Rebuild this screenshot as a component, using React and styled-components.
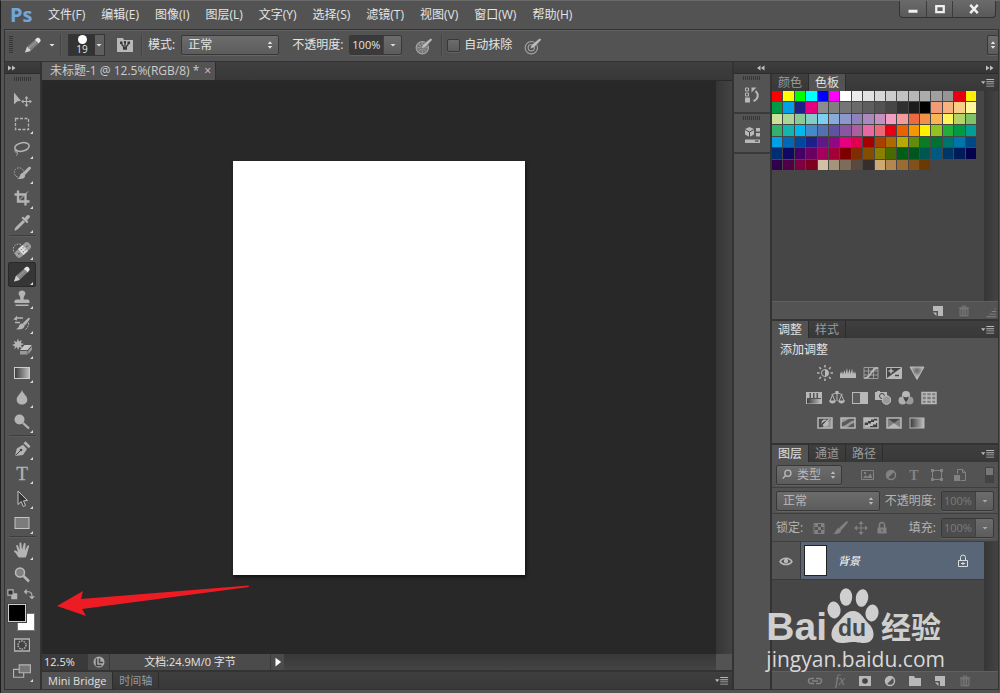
import React from 'react';
import styled, { createGlobalStyle, css } from 'styled-components';

const menus = ['文件(F)', '编辑(E)', '图像(I)', '图层(L)', '文字(Y)', '选择(S)', '滤镜(T)', '视图(V)', '窗口(W)', '帮助(H)'];

const swatches = `
ff0000 ffff00 00ff00 00ffff 0000ff ff00ff ffffff ebebeb e1e1e1 d7d7d7 cccccc c2c2c2 b7b7b7 acacac a0a0a0 959595 e60012 fff100
009944 00a0e9 1d2088 e4007f 8c8c8c 808080 757575 6a6a6a 5e5e5e 525252 464646 303030 1c1c1c 000000 f29b76 f6b37f facd89 fff799
cce198 acd598 89c997 84ccc9 7ecef4 88abda 8c97cb 8f82bc aa89bd c490bf f19ec2 f29c9f ec6941 f19149 f8b551 fff45c b3d465 80c269
32b16c 13b5b1 00b7ee 448aca 556fb5 5f52a0 8957a1 ae5da1 ea68a2 eb6877 e60012 eb6100 f39800 fff100 8fc31f 22ac38 009944 009e96
00a0e9 0068b7 00479d 1d2088 601986 920783 e4007f e5004f a40000 a84200 ac6a00 b7aa00 638c0b 097c25 007130 00736d 0075a9 004986
002e73 100964 440062 6a005f a4005b a40035 7d0000 7f2d00 834e00 8a8000 486a00 005e15 00561f 005752 005982 003567 001c58 03004c
31004a 500047 7e0043 7d0022 d1c0a5 a6937c 7e6b5a 59493f 362e2b cfa972 b28850 996c33 81511c 6a3906`.trim().split(/\s+/);

const toolGroups = [
  ['move', 'marquee', 'lasso', 'quickSelect', 'crop', 'eyedropper'],
  ['heal', 'pencil', 'stamp', 'history', 'eraser', 'gradient', 'blur', 'dodge'],
  ['pen', 'type', 'select', 'rectangle'],
  ['hand', 'zoom'],
];

const adjustments = [
  ['brightness', 'levels', 'curves', 'exposure', 'vibrance'],
  ['hue', 'balance', 'blackWhite', 'photoFilter', 'mixer', 'lookup'],
  ['invert', 'posterize', 'threshold', 'selective', 'gradientMap'],
];

const line = { fill: 'none', stroke: 'currentColor', strokeWidth: 1.5 };
const thin = { fill: 'none', stroke: 'currentColor', strokeWidth: 1 };

// tool drawings, on a 24 x 24 box
const toolIcons = {
  move: (
    <>
      <path d="M4 5.5v12l3-3 4-.8z" />
      <path d="M16.5 10v9M12 14.500h9" {...thin} strokeWidth="1.2" />
      <path d="M16.500 9l2 2.500h-4zM16.500 20l2-2.500h-4zM11 14.500l2.500-2v4zM22 14.500l-2.500-2v4z" />
    </>
  ),
  marquee: <rect x="5.500" y="6.500" width="13" height="11" {...thin} strokeDasharray="3 1.500" strokeWidth="1.300" />,
  lasso: (
    <>
      <ellipse cx="12" cy="10" rx="7.300" ry="4.200" transform="rotate(-12 12 10)" {...line} />
      <path d="M6 12.500c-2 1-1 3 .5 2.500s.8-2.500-.6-2M6.800 15c1 1 .5 2.500-.3 3.500" {...thin} />
    </>
  ),
  quickSelect: (
    <>
      <circle cx="9" cy="11.500" r="4.700" {...thin} strokeDasharray="1.500 1.300" />
      <path d="M20.500 6c.9.700.5 1.600-.1 2.200L15 14l-2.500-2 5.800-5.700c.7-.6 1.500-.9 2.200-.3z" />
      <path d="M12.500 12c2 .3 3 1.800 2.500 3.400-.9 2.500-4.700 3-8 2.100 2.400-.4 2.700-1.400 3.100-3 .3-1.300 1.100-2.300 2.400-2.500z" />
    </>
  ),
  crop: (
    <>
      <path d="M8 4.500V15.500h11.500M4.500 8.500h11V19.500" {...line} strokeWidth="2.300" />
      <path d="M8.500 15L18 5.500" {...thin} />
    </>
  ),
  eyedropper: (
    <>
      <path d="M13.500 9.500l-7 7-1.500 2.500 2.500-1.500 7-7" {...thin} strokeWidth="1.500" />
      <path d="M11.500 7L13 5.500l1.500 1.500 2.200-2.500c1.100-1.200 3.200-.5 3.300 1 0 .6-.2 1.200-.7 1.600L17 9.300l1.500 1.500L17 12.300z" />
    </>
  ),
  heal: (
    <>
      <path d="M11 6.500C6 4.500 1.500 9 4 14c1 2 2.500 3 3.500 3.500" {...thin} strokeDasharray="1.500 1.300" />
      <g transform="rotate(-43 13 12)">
        <rect x="4" y="8" width="18" height="8" rx="3.300" opacity=".75" />
        <rect x="10" y="8" width="6" height="8" fill="#ddd" />
        <path d="M11.500 10.500h1M14 10.500h1M11.500 13.500h1M14 13.500h1M6.500 12h2M17.500 12h2" stroke="#555" />
      </g>
    </>
  ),
  pencil: (
    <>
      <path d="M4 19.500l2-5.700 8.500-7.300 3.500 3.500-8.500 8z" fill="#808080" />
      <path d="M4 19.500l2-5.700c1.500.7 2.800 2 3.500 4.200z" fill="#cfcfcf" />
      <path d="M7.500 15.500l8.500-7.700" stroke="#a0a0a0" fill="none" />
      <path d="M13.800 7l2-1.900c1.700-1.400 4.900 1.500 3.500 3.500L17.500 10.500c-.7-1.500-2-2.800-3.700-3.500z" fill="#e4e4e4" />
    </>
  ),
  stamp: (
    <path d="M12 3.500c2.200 0 3.400 1.400 3.400 3 0 1.700-2 2.500-1.700 6h3.900c1.100 0 1.900.8 1.900 1.900V16h-15v-1.600c0-1.100.8-1.900 1.900-1.900h3.900c.3-3.500-1.700-4.300-1.700-6 0-1.600 1.200-3 3.400-3zM5.500 17.500h13V19h-13z" />
  ),
  history: (
    <>
      <path d="M19.500 6c.7.600.4 1.200-.1 1.800L15 13.500l-2.500-2 5.500-5.200c.5-.5 1-.8 1.500-.3z" />
      <path d="M12 11.500c2 .3 3 1.800 2.300 3.200-1.100 2.700-4.700 3.300-9.300 2.300 3-.3 3.300-1.300 4-3 .5-1.300 1.400-2.500 3-2.500z" />
      <path d="M6 6h7M5 10.500h5" {...line} />
      <path d="M18.500 10.500c0 4-1 6-4 7.500" {...thin} strokeDasharray="2 1" />
      <path d="M3.500 7.500L7 3.500v5z" />
    </>
  ),
  eraser: (
    <>
      <path d="M8 2.500l1 3 2.800-1.500-1 3 3.200 1-3 1.300 1.200 3-3-1.300-1 3-1.300-3L4 13.300l1-3-3-1.300 3-1.200-1.300-3 3 1.300z" />
      <path d="M14.500 9h7.300L17.500 14H10z" fill="#c8c8c8" />
      <path d="M10 15h7.500v3.500H10zM18.300 14.500l3.700-4.300v3.600l-3.700 4.500z" fill="#999" />
    </>
  ),
  gradient: <rect x="4.500" y="6.500" width="15" height="11" fill="url(#toolGradient)" stroke="#ccc" />,
  blur: <path d="M12 4c1.300 4 5.300 5.800 5.300 9.700 0 3-2.300 4.800-5.300 4.800s-5.300-1.800-5.300-4.800C6.700 9.800 10.700 8 12 4z" />,
  dodge: (
    <>
      <circle cx="9.500" cy="9.500" r="5" />
      <path d="M13 13l6 5.500" {...line} strokeWidth="2.300" />
    </>
  ),
  pen: (
    <>
      <path d="M5 19l1.800-7.500 6.200-3.700 4 4.200-4 6z" />
      <path d="M5.500 18.500l5-5" stroke="#444" />
      <circle cx="11" cy="13" r="1.300" fill="#444" />
      <path d="M13.500 6.300l2-2 5 5-1.700 2z" />
    </>
  ),
  type: <text x="12" y="18" textAnchor="middle" fontFamily="Liberation Serif, serif" fontSize="19" stroke="currentColor" strokeWidth=".3">T</text>,
  select: <path d="M8 4v13.500l3.200-3 2 5 2.300-1-2-4.700 4-.3z" fill="#363636" stroke="#c4c4c4" />,
  rectangle: <rect x="5" y="6.500" width="14" height="11" fill="#7c7c7c" stroke="#c4c4c4" />,
  hand: (
    <path d="M8.700 19.500c-1.500-2-2.500-4.200-4.500-5.700-.8-.9.500-1.800 1.500-1.200l2.200 1.500-1.700-6c-.3-1.300 1.300-1.600 1.700-.5l1.800 4.500-.3-6.500c0-1.500 1.800-1.500 2 0l.6 6.200L13.700 6c.3-1.400 2-1.200 1.900.3l-.5 6.200 2.200-4.600c.6-1.200 2.100-.6 1.700.7L17.500 14c-.4 2.200-1 4-2 5.500z" />
  ),
  zoom: (
    <>
      <circle cx="10" cy="9.500" r="4.500" fill="#808080" stroke="#bbb" strokeWidth="1.500" />
      <path d="M13.500 13l5.500 5.500" {...line} strokeWidth="2.600" />
    </>
  ),
};

// panel drawings, on a 16 x 16 box
const icons = {
  brushPanel: (
    <>
      <path d="M0 1h6l1 2h9v12H0z" />
      <path d="M4.500 7l2.500 3M8 6v3M11.500 7L9 10" stroke="#3a3a3a" strokeWidth="1.300" />
      <path d="M3 4.500h2.500V7H3zM7 4h2v2.500H7zM10.500 4.500H13V7h-2.500zM6 9.500h4v3.200H6z" fill="#3a3a3a" />
    </>
  ),
  pressure: (
    <>
      <circle cx="6.500" cy="9.500" r="5.500" fill="#777" stroke="#a4a4a4" />
      <path d="M1.500 9.500h10M6.500 4.500v10M3 6l7 7M10 6l-7 7" stroke="#9c9c9c" fill="none" strokeWidth=".8" />
      <path d="M5.500 10.500l1-3.300L14 1l1.500 1.500L8.800 9.500z" fill="#bdbdbd" stroke="#535353" strokeWidth=".5" />
    </>
  ),
  target: (
    <>
      <circle cx="6.500" cy="9.500" r="5.500" {...thin} stroke="#a4a4a4" />
      <circle cx="6.500" cy="9.500" r="2.800" {...thin} stroke="#a4a4a4" />
      <path d="M5.500 10.500l1-3.300L14 1l1.500 1.500L8.800 9.500z" fill="#bdbdbd" stroke="#535353" strokeWidth=".5" />
    </>
  ),
  historyPanel: (
    <>
      <path d="M1.500 1h3v3h-3zM1.500 6h3v3h-3z" {...thin} />
      <path d="M1 10.500h5v5H1z" />
      <path d="M9.500 14c5-2 5.500-7 2-10" {...line} strokeWidth="2" />
      <path d="M7.500 5.500V.5h5z" />
    </>
  ),
  properties: (
    <>
      <path d="M5.500 0L10 2v5.500L5.500 10 1 7.500V2z" />
      <path d="M1 2.500L5.500 5 10 2.500M5.500 5v5" stroke="#444" fill="none" />
      <path d="M12 1h4v3.500h-4zM12 6h4v3.500h-4zM1 12.500h15V16H1z" />
      <path d="M11 14h3.500" stroke="#333" />
    </>
  ),
  panelMenu: <path d="M0 6h5L2.500 9zM6 3.500h9v1H6zM6 6h9v1H6zM6 8.500h9v1H6zM6 11h9v1H6z" />,
  newItem: <path d="M3 3h10v10H8V8H3zM3 9.500h3.500V13z" />,
  trash: (
    <path d="M3.500 5.500h9v8h-9zM6 6v7M8 6v7M10 6v7M2 4.500h12M6 4V2.500h4V4" {...thin} />
  ),
  brightness: (
    <>
      <circle cx="8" cy="8" r="3.500" {...thin} />
      <path d="M8 4.500a3.500 3.500 0 010 7z" />
      <path d="M8 0v2.500M8 13.500V16M0 8h2.500M13.500 8H16M2.300 2.300L4 4M12 12l1.700 1.700M2.300 13.700L4 12M12 4l1.700-1.700" {...line} />
    </>
  ),
  levels: <path d="M0 13V7l1 2 1-3 1 3.500L4.500 5l1 4L7 3l1 6 1.500-5 1 5L12 3.500l1 5.500 1-3 1 3 1-2v6z" />,
  curves: (
    <>
      <path d="M1 2.500h14v11H1zM5.500 2.500v11M10.500 2.500v11M1 6h14M1 10h14" {...thin} opacity=".7" />
      <path d="M1.500 13C9 13 7 3 15 3" {...line} strokeWidth="1.800" />
    </>
  ),
  exposure: (
    <>
      <path d="M.5 2.500h15v11H.5z" fill="#444" stroke="currentColor" />
      <path d="M15 3v10H1z" />
      <path d="M2.500 6h5M5 3.500v5" {...line} />
      <path d="M9 10.500h4" stroke="#444" strokeWidth="1.500" />
    </>
  ),
  vibrance: <path d="M1 2h14L8 14.500z" fill="url(#vibrance)" stroke="currentColor" />,
  hue: (
    <>
      <rect x=".5" y="2.500" width="15" height="11" {...thin} />
      <path d="M1 3h2.500v5H1zM5 3h2v5H5zM8.500 3h2v5h-2zM12 3h3v5h-3z" />
      <rect x="1" y="9" width="14" height="4.500" fill="url(#toolGradient)" />
    </>
  ),
  balance: (
    <>
      <path d="M8 2v9M2.500 4.500C5 4.500 5 3 8 3s3 1.500 5.500 1.500M3.500 5L1 11M3.500 5L6 11M12.500 5L10 11M12.500 5L15 11" {...thin} />
      <path d="M0 10.500h7c-.5 4-6.500 4-7 0zM9 10.500h7c-.5 4-6.500 4-7 0zM6.500 1h3v3h-3z" />
    </>
  ),
  blackWhite: (
    <>
      <rect x=".5" y="2.500" width="15" height="11" fill="#5c5c5c" stroke="currentColor" />
      <path d="M8 3h7v10H8z" />
    </>
  ),
  photoFilter: (
    <>
      <path d="M0 2h2V1h3v1h7v8H0z" />
      <circle cx="7" cy="6" r="2.500" fill="none" stroke="#444" />
      <circle cx="11.500" cy="10" r="4.300" fill="#9a9a9a" stroke="#c4c4c4" />
    </>
  ),
  mixer: (
    <>
      <circle cx="8" cy="5" r="4" />
      <circle cx="4.500" cy="10.500" r="4" opacity=".9" />
      <circle cx="11.500" cy="10.500" r="4" opacity=".7" />
      <path d="M5 6.500L8 7.500l3-1-1.200 3L8 12.500 6.200 9.500z" fill="#444" />
    </>
  ),
  lookup: <path d="M1 2.500h14v11H1zM5.500 2.500v11M10.500 2.500v11M1 6h14M1 10h14" {...line} fill="#7c7c7c" />,
  invert: (
    <>
      <rect x="1" y="3" width="14" height="10" fill="#4a4a4a" stroke="currentColor" strokeWidth="1.500" />
      <path d="M15 3v10H5z" opacity=".7" />
      <circle cx="8" cy="8" r="3.500" />
      <path d="M2 13l3.500-5.500 5-3L6 10.500z" fill="#4a4a4a" />
      <path d="M6 10.500L12.500 4" {...line} />
    </>
  ),
  posterize: (
    <>
      <rect x="1" y="3" width="14" height="10" fill="#5a5a5a" stroke="currentColor" strokeWidth="1.500" />
      <path d="M1 7.500C6 7 8 3 12 3H1zM1 11.500c7-1 8-6 14-6V8c-5 0-6 5-11 5H1z" opacity=".7" />
    </>
  ),
  threshold: (
    <>
      <rect x="1" y="3" width="14" height="10" fill="#3f3f3f" stroke="currentColor" strokeWidth="1.500" />
      <path d="M1 3h10v1.500H8V6H5v1.500H1zM2 11.500v-1.500h3V8.500h3V7h3V5.500h4V8h-2v1.500h-3V11H7v1.500H2z" />
    </>
  ),
  selective: (
    <>
      <rect x="1" y="3" width="14" height="10" fill="#484848" stroke="currentColor" strokeWidth="1.500" />
      <path d="M1 3l7 5-7 5zM15 3L8 8l7 5z" opacity=".5" />
      <path d="M1 13h14L8 8z" />
    </>
  ),
  gradientMap: <rect x="1" y="3" width="14" height="10" fill="url(#toolGradient)" stroke="currentColor" />,
  image: (
    <>
      <path d="M1.500 3.500h12v9h-12z" {...thin} />
      <path d="M3 11l2.500-3 2 2 3-3.500 2 4.500zM4 5h2v2H4z" />
    </>
  ),
  halfCircle: (
    <>
      <circle cx="8" cy="8" r="4.500" {...line} />
      <path d="M4.500 11.500a5 5 0 017-7z" />
    </>
  ),
  letter: <text x="8" y="13" textAnchor="middle" fontFamily="Liberation Serif, serif" fontSize="14" fontWeight="700">T</text>,
  shape: (
    <>
      <path d="M3.500 3.500h9v9h-9z" {...thin} />
      <path d="M2 2h3v3H2zM11 2h3v3h-3zM2 11h3v3H2zM11 11h3v3h-3z" />
    </>
  ),
  smart: (
    <>
      <path d="M5.500 7V2.500h5l3 3v8h-5M10.500 2.500v3h3" {...thin} />
      <path d="M2 8h6v6H2z" />
    </>
  ),
  checker: (
    <>
      <path d="M3 3.500h10v10H3z" {...thin} />
      <path d="M4 4h3v3H4zM10 4h3v3h-3zM7 7h3v3H7zM4 10h3v3H4zM10 10h3v3h-3z" />
    </>
  ),
  brush: <path d="M15.500 1.500c.7.600.2 1.500-.4 2.100L9.500 10 7 8l6.500-6c.6-.5 1.400-1 2-.5zM6.500 8.300c2 .2 3 1.600 2.400 3-1.100 2.700-4.500 3.200-8.400 2.200 2.400-.3 2.700-1.100 3.500-2.700.5-1.300 1.200-2.400 2.500-2.500z" />,
  cross: (
    <>
      <path d="M8 3v10M3 8h10" {...thin} />
      <path d="M8 1l2.500 3h-5zM8 15l2.500-3h-5zM1 8l3-2.500v5zM15 8l-3-2.500v5z" />
    </>
  ),
  lock: (
    <>
      <path d="M5.500 8V5a2.500 2.500 0 015 0v3" {...line} />
      <path d="M3.500 7.500h9v6h-9z" />
      <path d="M8 9v3" stroke="#555" />
    </>
  ),
  layerLock: (
    <>
      <path d="M5.500 7V4.500a2.500 2.500 0 015 0V7" {...thin} />
      <path d="M3.500 7.500h9v6h-9zM8 9v3M6 10.500h4" {...thin} />
    </>
  ),
  eye: (
    <>
      <path d="M2 8.500c2.500-4.500 9.500-4.500 12 0-2.500 4-9.500 4-12 0z" {...line} />
      <circle cx="8" cy="8" r="2.200" />
    </>
  ),
  link: <path d="M7 5.500H4a2.500 2.500 0 000 5h3M9 5.500h3a2.500 2.500 0 010 5H9M5 8h6" {...line} />,
  fx: <text x="8" y="12" textAnchor="middle" fontFamily="Liberation Serif, serif" fontStyle="italic" fontSize="14">fx</text>,
  mask: (
    <>
      <path d="M2 3h12v10H2z" />
      <circle cx="8" cy="8" r="2.800" fill="#444" />
    </>
  ),
  folder: <path d="M2 3h5l1 2h6v8H2z" />,
  search: (
    <>
      <circle cx="9" cy="6" r="3.500" {...line} />
      <path d="M6.500 8.500L3 12" {...line} />
    </>
  ),
  statusDoc: (
    <>
      <circle cx="8" cy="8" r="5.500" fill="#aaa" />
      <path d="M5.500 4.500v7h5M8.500 4.500v4h3.500" stroke="#444" fill="none" strokeWidth="1.500" />
    </>
  ),
  quickMask: (
    <>
      <path d="M.5 2h15v12H.5z" fill="#444" stroke="currentColor" strokeWidth="1.300" />
      <circle cx="8" cy="8" r="4" {...line} strokeDasharray="1.500 1" />
    </>
  ),
  screenMode: (
    <>
      <path d="M.5 6.500h9v7h-9z" {...thin} />
      <path d="M5.500 2.500h10v7h-10z" fill="#777" stroke="currentColor" />
    </>
  ),
  defaults: (
    <>
      <path d="M7 7h8v8H7z" />
      <path d="M2.500 2.500h7v7h-7z" fill="#333" stroke="currentColor" strokeWidth="1.500" />
    </>
  ),
  swap: (
    <>
      <path d="M4 5h3c3 0 5 2 5 6" {...line} />
      <path d="M1 5l4-4v8zM12 15l-4-4h8z" />
    </>
  ),
  spin: <path d="M8 2l3.500 4.500h-7zM8 14l3.500-4.500h-7z" />,
  down: <path d="M3 6h10l-5 5z" />,
  play: <path d="M4 1l9 7-9 7z" />,
  forward: <path d="M0 3l7 5-7 5zM8 3l7 5-7 5z" />,
  back: <path d="M7 3L0 8l7 5zM15 3L8 8l7 5z" />,
  minimize: <path d="M2 9h12v4H2z" />,
  maximize: <path d="M3 4h10v8H3z" fill="none" stroke="currentColor" strokeWidth="3" />,
  close: <path d="M3 2.500l10 11M13 2.500l-10 11" fill="none" stroke="currentColor" strokeWidth="3.200" />,
  grip: <path d="M13 5h2v1h-2zM10 8h5v1h-5zM7 11h8v1H7zM4 14h11v1H4z" />,
};

function Icon({ name, size = 16, box = 16 }) {
  const art = box === 24 ? toolIcons[name] : icons[name];
  return (
    <svg width={size} height={size} viewBox={`0 0 ${box} ${box}`} fill="currentColor" aria-hidden="true">
      {art}
    </svg>
  );
}

function Dropdown({ label, value, width, icon, dim }) {
  return (
    <SelectBox $width={width} $dim={dim}>
      {icon && <Icon name={icon} size={14} />}
      <select aria-label={label} defaultValue={value}>
        <option>{value}</option>
      </select>
      <Icon name="spin" size={10} />
    </SelectBox>
  );
}

function Percent({ id, dim }) {
  return (
    <NumberBox $dim={dim}>
      <input id={id} defaultValue="100%" />
      <button type="button" aria-label="展开"><Icon name="down" size={8} /></button>
    </NumberBox>
  );
}

function Tabs({ items, active }) {
  return (
    <TabBar>
      {items.map((item) => (
        <Tab key={item} type="button" $active={item === active}>{item}</Tab>
      ))}
      <PanelMenu type="button" aria-label="面板菜单"><Icon name="panelMenu" size={14} /></PanelMenu>
    </TabBar>
  );
}

export default function App() {
  return (
    <>
      <GlobalStyle />
      <Gradients width="0" height="0" aria-hidden="true">
        <linearGradient id="toolGradient">
          <stop offset="0" stopColor="#3a3a3a" />
          <stop offset="1" stopColor="#c0c0c0" />
        </linearGradient>
        <radialGradient id="vibrance" cy=".3">
          <stop offset="0" stopColor="#666" />
          <stop offset="1" stopColor="#bbb" />
        </radialGradient>
      </Gradients>

      <Window>
        <MenuBar>
          <Logo>Ps</Logo>
          <nav>
            {menus.map((menu) => <MenuItem key={menu} type="button">{menu}</MenuItem>)}
          </nav>
          <WindowButtons>
            <button type="button" aria-label="最小化"><Icon name="minimize" size={12} /></button>
            <button type="button" aria-label="最大化"><Icon name="maximize" size={12} /></button>
            <button type="button" aria-label="关闭"><Icon name="close" size={12} /></button>
          </WindowButtons>
        </MenuBar>

        {/* ================= options ================= */}

        <OptionsBar>
          <Grip $vertical />
          <ToolPreset type="button" aria-label="铅笔工具">
            <Icon name="pencil" size={24} box={24} />
            <Icon name="down" size={8} />
          </ToolPreset>
          <Divider />
          <BrushPreset type="button" aria-label="画笔大小 19">
            <span><i />19</span>
            <Icon name="down" size={8} />
          </BrushPreset>
          <IconButton type="button" aria-label="画笔面板"><Icon name="brushPanel" /></IconButton>
          <Divider />
          <Field>
            <span>模式:</span>
            <Dropdown label="模式" value="正常" width={98} />
          </Field>
          <Field>
            <label htmlFor="opacity">不透明度:</label>
            <Percent id="opacity" />
          </Field>
          <IconButton type="button" aria-label="压力控制不透明度"><Icon name="pressure" size={18} /></IconButton>
          <Divider />
          <CheckLabel><input type="checkbox" />自动抹除</CheckLabel>
          <IconButton type="button" aria-label="压力控制大小"><Icon name="target" size={18} /></IconButton>
          <Workspace type="button" aria-label="工作区"><Icon name="spin" size={10} /></Workspace>
        </OptionsBar>

        <Work>
          {/* ================= tools ================= */}

          <Toolbar>
            <DockHeader><Icon name="forward" size={8} /></DockHeader>
            <Grip />
            <ToolList>
              {toolGroups.map((group, i) => (
                <React.Fragment key={group[0]}>
                  {i > 0 && <ToolLine />}
                  {group.map((tool) => (
                    <Tool
                      key={tool}
                      type="button"
                      aria-label={tool}
                      $active={tool === 'pencil'}
                      $more={tool !== 'move' && tool !== 'zoom'}
                    >
                      <Icon name={tool} size={24} box={24} />
                    </Tool>
                  ))}
                </React.Fragment>
              ))}
            </ToolList>
            <ColorActions>
              <button type="button" aria-label="默认颜色"><Icon name="defaults" size={12} /></button>
              <button type="button" aria-label="切换颜色"><Icon name="swap" size={12} /></button>
            </ColorActions>
            <Colors>
              <button type="button" aria-label="前景色" />
              <button type="button" aria-label="背景色" />
            </Colors>
            <Tool type="button" aria-label="快速蒙版" $fixed><Icon name="quickMask" /></Tool>
            <Tool type="button" aria-label="屏幕模式" $fixed $more><Icon name="screenMode" size={18} /></Tool>
          </Toolbar>

          {/* ================= document ================= */}

          <Document>
            <DocTabs>
              <DocTab>
                未标题-1 @ 12.5%(RGB/8) *
                <button type="button" aria-label="关闭文档">×</button>
              </DocTab>
            </DocTabs>
            <CanvasRow>
              <Canvas>
                <Paper />
                <Arrow width="193" height="32" viewBox="0 0 193 32" aria-hidden="true">
                  <path d="M0 21L26 6l-2 8L191.500.500l.5 1.500L25 24l4 7z" />
                </Arrow>
              </Canvas>
              <ScrollTrack $width={16} />
            </CanvasRow>
            <Status>
              <input aria-label="缩放" defaultValue="12.5%" />
              <StatusIcon><Icon name="statusDoc" /></StatusIcon>
              <StatusText>文档:24.9M/0 字节</StatusText>
              <button type="button" aria-label="状态选项"><Icon name="play" size={10} /></button>
              <StatusTrack />
              <Corner />
            </Status>
            <BottomBar>
              <Tabs items={['Mini Bridge', '时间轴']} active="Mini Bridge" />
            </BottomBar>
          </Document>

          {/* ================= docks ================= */}

          <Dock>
            <DockHeader>
              <DockEnd><Icon name="back" size={8} /></DockEnd>
              <Icon name="forward" size={8} />
            </DockHeader>
            <DockBody>
              <IconColumn>
                <IconGroup><Grip /><IconButton type="button" aria-label="历史记录"><Icon name="historyPanel" /></IconButton></IconGroup>
                <IconGroup><Grip /><IconButton type="button" aria-label="属性"><Icon name="properties" /></IconButton></IconGroup>
              </IconColumn>

              <Panels>
                <Panel>
                  <Tabs items={['颜色', '色板']} active="色板" />
                  <PanelScroll $height={210}>
                    <SwatchArea>
                      <SwatchGrid>
                        {swatches.map((color, i) => (
                          <button key={i} type="button" aria-label={`#${color}`} style={{ background: `#${color}` }} />
                        ))}
                      </SwatchGrid>
                    </SwatchArea>
                    <ScrollTrack $width={14} />
                  </PanelScroll>
                  <PanelFooter>
                    <IconButton type="button" aria-label="新建色板"><Icon name="newItem" /></IconButton>
                    <IconButton type="button" aria-label="删除色板" $dim><Icon name="trash" size={14} /></IconButton>
                    <IconButton as="span" $dim><Icon name="grip" size={14} /></IconButton>
                  </PanelFooter>
                </Panel>

                <Panel>
                  <Tabs items={['调整', '样式']} active="调整" />
                  <Adjust>
                    <p>添加调整</p>
                    {adjustments.map((row) => (
                      <AdjustRow key={row[0]}>
                        {row.map((name) => (
                          <IconButton key={name} type="button" aria-label={name}><Icon name={name} /></IconButton>
                        ))}
                      </AdjustRow>
                    ))}
                  </Adjust>
                </Panel>

                <Panel $grow>
                  <Tabs items={['图层', '通道', '路径']} active="图层" />
                  <LayerRow>
                    <Dropdown label="过滤类型" value="类型" width={66} icon="search" dim />
                    <FilterIcons>
                      {['image', 'halfCircle', 'letter', 'shape', 'smart'].map((name) => (
                        <IconButton key={name} type="button" aria-label={name} $dim><Icon name={name} /></IconButton>
                      ))}
                    </FilterIcons>
                    <FilterSwitch type="button" aria-label="图层过滤开关" />
                  </LayerRow>
                  <LayerRow>
                    <Dropdown label="混合模式" value="正常" width={104} dim />
                    <Field $dim>
                      <label htmlFor="layer-opacity">不透明度:</label>
                      <Percent id="layer-opacity" dim />
                    </Field>
                  </LayerRow>
                  <LayerRow $last>
                    <Field $dim>锁定:</Field>
                    <LockIcons>
                      {['checker', 'brush', 'cross', 'lock'].map((name) => (
                        <IconButton key={name} type="button" aria-label={name} $dim><Icon name={name} /></IconButton>
                      ))}
                    </LockIcons>
                    <Field $dim>
                      <label htmlFor="layer-fill">填充:</label>
                      <Percent id="layer-fill" dim />
                    </Field>
                  </LayerRow>
                  <PanelScroll $grow>
                    <LayerList>
                      <Layer>
                        <IconButton type="button" aria-label="可见"><Icon name="eye" /></IconButton>
                        <LayerBody>
                          <Thumb />
                          <em>背景</em>
                          <Icon name="layerLock" />
                        </LayerBody>
                      </Layer>
                    </LayerList>
                    <ScrollTrack $width={14} />
                  </PanelScroll>
                  <PanelFooter $wide>
                    <IconButton type="button" aria-label="链接" $dim><Icon name="link" /></IconButton>
                    <IconButton type="button" aria-label="样式" $dim><Icon name="fx" /></IconButton>
                    <IconButton type="button" aria-label="蒙版"><Icon name="mask" /></IconButton>
                    <IconButton type="button" aria-label="调整图层"><Icon name="halfCircle" /></IconButton>
                    <IconButton type="button" aria-label="新建组"><Icon name="folder" /></IconButton>
                    <IconButton type="button" aria-label="新建图层"><Icon name="newItem" /></IconButton>
                    <IconButton type="button" aria-label="删除图层" $dim><Icon name="trash" size={14} /></IconButton>
                  </PanelFooter>
                </Panel>
              </Panels>
            </DockBody>
          </Dock>
        </Work>

        <Watermark>
          <WatermarkTop>
            <strong>Bai</strong>
            <svg width="52" height="58" viewBox="0 0 52 58" fill="currentColor" aria-hidden="true">
              <ellipse cx="7" cy="23" rx="6.500" ry="8.500" transform="rotate(-8 7 23)" />
              <ellipse cx="19" cy="10" rx="6.200" ry="8.800" />
              <ellipse cx="35" cy="11" rx="6.200" ry="8.800" transform="rotate(10 35 11)" />
              <ellipse cx="45" cy="26" rx="6.500" ry="8.500" transform="rotate(8 45 26)" />
              <path d="M26 24c8 0 10 7 15 12 8 7 8 20-4 20-5 0-7-1-11-1s-6 1-11 1C2 56 2 43 10 36c6-5 8-12 16-12z" />
              <text x="25" y="49" textAnchor="middle" fill="#484848" fontFamily="Liberation Sans, sans-serif" fontWeight="700" fontSize="23">du</text>
            </svg>
            <b>经验</b>
          </WatermarkTop>
          <span>jingyan.baidu.com</span>
        </Watermark>
      </Window>
    </>
  );
}

const GlobalStyle = createGlobalStyle`
  *, *::before, *::after { box-sizing: border-box; }

  body {
    margin: 0;
    background: #535353;
    color: #e4e4e4;
    font: 12px/16px "Open Sans", "Noto Sans CJK SC", sans-serif;
  }

  button, input, select {
    margin: 0;
    padding: 0;
    border: 0;
    border-radius: 0;
    background: none;
    color: inherit;
    font: inherit;
    outline: 0;
  }

  svg { display: block; flex: none; }
`;

const raised = css`
  background: linear-gradient(#6c6c6c, #5c5c5c);
  border: 1px solid #383838;
  border-radius: 2px;
  box-shadow: 0 1px 0 #636363;
`;

const Gradients = styled.svg`
  position: absolute;
`;

const Window = styled.div`
  position: relative;
  display: flex;
  flex-direction: column;
  min-height: 100vh;
  padding-bottom: 3px;
  border-top: 1px solid #6a6a6a;
  border-left: 1px solid #1e1e1e;
  overflow: hidden;
`;

// ===========> MENU <=============== //

const MenuBar = styled.header`
  display: flex;
  align-items: center;
  height: 28px;
  padding-left: 9px;

  nav {
    display: flex;
    flex: 1;
    gap: 2px;
    padding-left: 9px;
  }
`;

const Logo = styled.strong`
  width: 22px;
  color: #74a6da;
  font-size: 20px;
  line-height: 24px;
`;

const MenuItem = styled.button`
  padding: 0 7px;
  white-space: nowrap;
`;

const WindowButtons = styled.div`
  display: flex;
  align-self: flex-start;
  height: 17px;
  margin-right: 4px;
  border: 1px solid #333;
  border-top: 0;
  border-radius: 0 0 4px 4px;
  background: linear-gradient(#6a6a6a, #595959);
  color: #f0f0f0;

  button {
    display: grid;
    place-items: center;
    width: 26px;
  }

  button + button { border-left: 1px solid #3c3c3c; }
  button:last-child { width: 43px; }
`;

// ===========> OPTIONS <=============== //

const IconButton = styled.button`
  display: grid;
  place-items: center;
  flex: none;
  min-width: 16px;
  height: 16px;
  color: ${(p) => (p.$dim ? '#828282' : '#b8b8b8')};
`;

const OptionsBar = styled.div`
  display: flex;
  align-items: center;
  height: 33px;
  margin: 0 1px 0 3px;
  padding: 0 0 1px 4px;
  border: 1px solid #333;
  box-shadow: inset 0 1px 0 #606060;

  > ${IconButton} { margin: 0 8px 0 5px; }
`;

const Grip = styled.div`
  flex: none;
  width: ${(p) => (p.$vertical ? '4px' : '18px')};
  height: ${(p) => (p.$vertical ? '18px' : '4px')};
  margin: ${(p) => (p.$vertical ? '0 8px 0 0' : '3px auto 0')};
  background: repeating-linear-gradient(${(p) => (p.$vertical ? '180deg' : '90deg')}, #363636 0 1px, #535353 1px 2px);
`;

const Divider = styled.div`
  flex: none;
  width: 2px;
  height: 22px;
  background: #444;
  border-right: 1px solid #5a5a5a;
`;

const ToolPreset = styled.button`
  display: flex;
  align-items: center;
  gap: 3px;
  margin-right: 4px;
`;

const BrushPreset = styled.button`
  display: flex;
  align-items: center;
  height: 22px;
  margin: 0 7px 0 6px;
  padding-right: 1px;
  background: #5f5f5f;
  border: 1px solid #363636;

  span {
    display: flex;
    flex-direction: column;
    align-items: center;
    width: 26px;
    height: 20px;
    background: #333;
    font-size: 10px;
    line-height: 10px;
  }

  i {
    flex: none;
    width: 9px;
    height: 9px;
    border-radius: 50%;
    background: #fff;
  }
`;

const Field = styled.div`
  display: flex;
  align-items: center;
  gap: ${(p) => (p.$dim ? '5px' : '6px')};
  color: ${(p) => (p.$dim ? '#b4b4b4' : 'inherit')};
  white-space: nowrap;

  ${OptionsBar} > & { margin: 0 8px 0 5px; }
`;

const SelectBox = styled.div`
  display: flex;
  align-items: center;
  flex: none;
  width: ${(p) => p.$width}px;
  height: 20px;
  padding: 0 3px;
  color: ${(p) => (p.$dim ? '#b8b8b8' : 'inherit')};
  ${raised}

  select {
    appearance: none;
    flex: 1;
    min-width: 0;
    padding-left: 3px;
  }
`;

const NumberBox = styled.div`
  display: flex;
  height: 20px;
  ${raised}
  color: ${(p) => (p.$dim ? '#7c7c7c' : 'inherit')};

  input {
    width: 33px;
    padding-left: 2px;
    background: ${(p) => (p.$dim ? '#4c4c4c' : '#3a3a3a')};
    font-size: 11px;
  }

  button {
    display: grid;
    place-items: center;
    width: 18px;
    border-left: 1px solid #424242;
    color: ${(p) => (p.$dim ? '#aaa' : '#ddd')};
  }
`;

const CheckLabel = styled.label`
  display: flex;
  align-items: center;
  gap: 4px;
  margin: 0 7px 0 4px;

  input {
    appearance: none;
    width: 13px;
    height: 13px;
    ${raised}
  }
`;

const Workspace = styled.button`
  width: 11px;
  height: 20px;
  margin-left: auto;
  overflow: hidden;
  ${raised}
  border-right: 0;
`;

// ===========> WORK AREA <=============== //

const Work = styled.main`
  display: flex;
  flex: 1;
  margin: 0 1px 0 3px;
  border: 1px solid #333;
  border-top: 0;
  background: #333;
`;

const DockHeader = styled.div`
  display: flex;
  align-items: center;
  flex: none;
  height: 12px;
  padding: 0 4px 0 3px;
  background: linear-gradient(#3e3e3e, #363636);
  border-bottom: 1px solid #2c2c2c;
  color: #c0c0c0;
`;

const DockEnd = styled.span`
  flex: 1;
  padding-left: 20px;
`;

const Toolbar = styled.aside`
  display: flex;
  flex-direction: column;
  flex: none;
  width: 35px;
  margin-right: 2px;
  background: #535353;
`;

const ToolList = styled.div`
  display: flex;
  flex-direction: column;
  height: 500px;
  margin-top: 6px;
`;

const ToolLine = styled.div`
  flex: none;
  height: 2px;
  margin: 0 4px;
  background: #3e3e3e;
  border-bottom: 1px solid #5c5c5c;
`;

const Tool = styled.button`
  position: relative;
  display: grid;
  place-items: center;
  flex: ${(p) => (p.$fixed ? 'none' : '1')};
  width: 28px;
  height: ${(p) => (p.$fixed ? '26px' : 'auto')};
  min-height: 0;
  margin: 0 4px 0 3px;
  color: #b4b4b4;
  ${(p) => p.$active && css`
    background: #363636;
    border-radius: 3px;
    box-shadow: inset 0 0 0 1px #2a2a2a;
  `}

  ${(p) => p.$more && css`
    &::after {
      content: '';
      position: absolute;
      right: 3px;
      bottom: 2px;
      border-left: 3px solid transparent;
      border-bottom: 3px solid #d8d8d8;
    }
  `}
`;

const ColorActions = styled.div`
  display: flex;
  justify-content: space-between;
  padding: 1px 5px 0 1px;
  color: #b4b4b4;
`;

const Colors = styled.div`
  display: grid;
  grid-template: 9px 9px 9px / 9px 9px 9px;
  margin: 4px 0 1px 3px;

  button {
    grid-area: 2 / 2 / 4 / 4;
    background: #fff;
    border: 1px solid #777;
  }

  button:first-child {
    z-index: 1;
    grid-area: 1 / 1 / 3 / 3;
    background: #000;
    border: 1px solid #ccc;
    box-shadow: 0 0 0 1px #444;
  }
`;

// ===========> DOCUMENT <=============== //

const Document = styled.section`
  display: flex;
  flex-direction: column;
  flex: 1;
  min-width: 0;
`;

const DocTabs = styled.div`
  display: flex;
  height: 19px;
  background: linear-gradient(#3f3f3f, #383838);
  border-bottom: 1px solid #2a2a2a;
`;

const DocTab = styled.div`
  display: flex;
  align-items: center;
  gap: 5px;
  padding: 0 4px 0 8px;
  background: #535353;
  color: #ccc;
  border-right: 1px solid #2f2f2f;
  white-space: nowrap;
`;

const CanvasRow = styled.div`
  display: flex;
  flex: 1;
`;

const Canvas = styled.div`
  position: relative;
  display: grid;
  place-items: center;
  flex: 1;
  background: #282828;
`;

const Paper = styled.div`
  width: 292px;
  height: 414px;
  background: #fff;
  box-shadow: 1px 2px 3px #111;
`;

const Arrow = styled.svg`
  position: absolute;
  left: 15px;
  bottom: 37px;
  fill: #ed1c24;
`;

const ScrollTrack = styled.div`
  flex: none;
  width: ${(p) => p.$width}px;
  background: linear-gradient(90deg, #363636, #434343);
`;

const Status = styled.div`
  display: flex;
  height: 16px;
  background: #333;
  font-size: 11px;
  line-height: 16px;

  input {
    width: 46px;
    padding-left: 2px;
    background: #3a3a3a;
  }

  button {
    display: grid;
    place-items: center;
    width: 13px;
    background: #4b4b4b;
    color: #fff;
  }
`;

const StatusIcon = styled.span`
  display: grid;
  place-items: center;
  width: 22px;
  background: #4b4b4b;
  border-right: 1px solid #3a3a3a;
`;

const StatusText = styled.span`
  width: 161px;
  background: #4b4b4b;
  border-right: 1px solid #3a3a3a;
  text-align: center;
`;

const StatusTrack = styled.span`
  flex: 1;
  background: linear-gradient(#383838, #444);
`;

const Corner = styled.span`
  width: 16px;
  background: #535353;
`;

const BottomBar = styled.div`
  padding-top: 2px;
`;

// ===========> PANELS <=============== //

const TabBar = styled.div`
  display: flex;
  height: 17px;
  background: linear-gradient(#3f3f3f, #383838);

  ${BottomBar} & {
    font-size: 11px;
  }
`;

const Tab = styled.button`
  height: 17px;
  padding: 0 6px;
  background: ${(p) => (p.$active ? '#535353' : 'transparent')};
  border-right: 1px solid #2c2c2c;
  color: ${(p) => (p.$active ? '#e0e0e0' : '#9a9a9a')};
  line-height: 15px;
  white-space: nowrap;
`;

const PanelMenu = styled.button`
  margin-left: auto;
  padding-right: 3px;
  color: #b8b8b8;
`;

const Dock = styled.aside`
  display: flex;
  flex-direction: column;
  flex: none;
  margin-left: 2px;
`;

const DockBody = styled.div`
  display: flex;
  flex: 1;
`;

const IconColumn = styled.div`
  width: 36px;
  margin-right: 2px;
  background: #535353;
`;

const IconGroup = styled.div`
  height: 38px;
  border-bottom: 2px solid #3a3a3a;

  ${Grip} { margin-top: 2px; }
  ${IconButton} { margin: 7px auto 0; }
`;

const Panels = styled.div`
  display: flex;
  flex-direction: column;
  gap: 2px;
  width: 226px;
`;

const Panel = styled.section`
  display: flex;
  flex-direction: column;
  flex: ${(p) => (p.$grow ? '1' : 'none')};
  background: #535353;
`;

const PanelScroll = styled.div`
  display: flex;
  flex: ${(p) => (p.$grow ? '1' : 'none')};
  height: ${(p) => (p.$height ? `${p.$height}px` : 'auto')};
  background: #464646;
`;

const SwatchArea = styled.div`
  flex: 1;
`;

const SwatchGrid = styled.div`
  display: grid;
  grid-template-columns: repeat(18, 1fr);
  grid-template-rows: repeat(7, 1fr);
  gap: 1px;
  width: 204px;
  height: 79px;
`;

const PanelFooter = styled.footer`
  display: flex;
  align-items: center;
  justify-content: flex-end;
  gap: ${(p) => (p.$wide ? '9px' : '10px')};
  height: 18px;
  padding-right: ${(p) => (p.$wide ? '25px' : '0')};
  border-top: 1px solid #606060;
`;

const Adjust = styled.div`
  height: 105px;
  padding: 4px 28px 0 8px;

  p { margin: 0 0 7px; }
`;

const AdjustRow = styled.div`
  display: flex;
  justify-content: center;
  gap: 7px;
  margin: 0 8px 9px 0;
`;

const LayerRow = styled.div`
  display: flex;
  align-items: center;
  justify-content: space-between;
  height: ${(p) => (p.$last ? '28px' : '26px')};
  padding: 0 4px;
  border-bottom: 1px solid #3f3f3f;
`;

const FilterIcons = styled.div`
  display: flex;
  gap: 7px;
`;

const LockIcons = styled.div`
  display: flex;
  gap: 5px;
  margin-right: 12px;
`;

const FilterSwitch = styled.button`
  width: 9px;
  height: 16px;
  border: 1px solid #424242;
  background: linear-gradient(#777 0 50%, #444 50%);
`;

const LayerList = styled.div`
  flex: 1;
`;

const Layer = styled.div`
  display: flex;
  height: 38px;
  align-items: center;
  background: #535353;
  border-bottom: 1px solid #3a3a3a;

  ${IconButton} { width: 28px; }
`;

const LayerBody = styled.div`
  display: flex;
  align-items: center;
  flex: 1;
  height: 37px;
  padding: 0 13px 0 4px;
  background: #596678;
  border-left: 1px solid #3a3a3a;
  color: #ddd;

  em {
    flex: 1;
    color: #fff;
    font-size: 11px;
  }
`;

const Thumb = styled.div`
  width: 21px;
  height: 29px;
  margin-right: 12px;
  background: #fff;
  outline: 1px solid #222;
`;

// ===========> WATERMARK <=============== //

const Watermark = styled.div`
  position: absolute;
  right: 55px;
  bottom: 20px;
  color: #cfcfcf;
  pointer-events: none;

  > span {
    display: block;
    font-size: 21px;
    line-height: 28px;
    color: #d8d8d8;
  }
`;

const WatermarkTop = styled.div`
  display: flex;
  align-items: flex-end;

  strong {
    font: 700 39px/36px "Liberation Sans", sans-serif;
  }

  b {
    margin: 0 0 4px 2px;
    font: 700 30px/32px "Noto Sans CJK SC", sans-serif;
  }
`;
